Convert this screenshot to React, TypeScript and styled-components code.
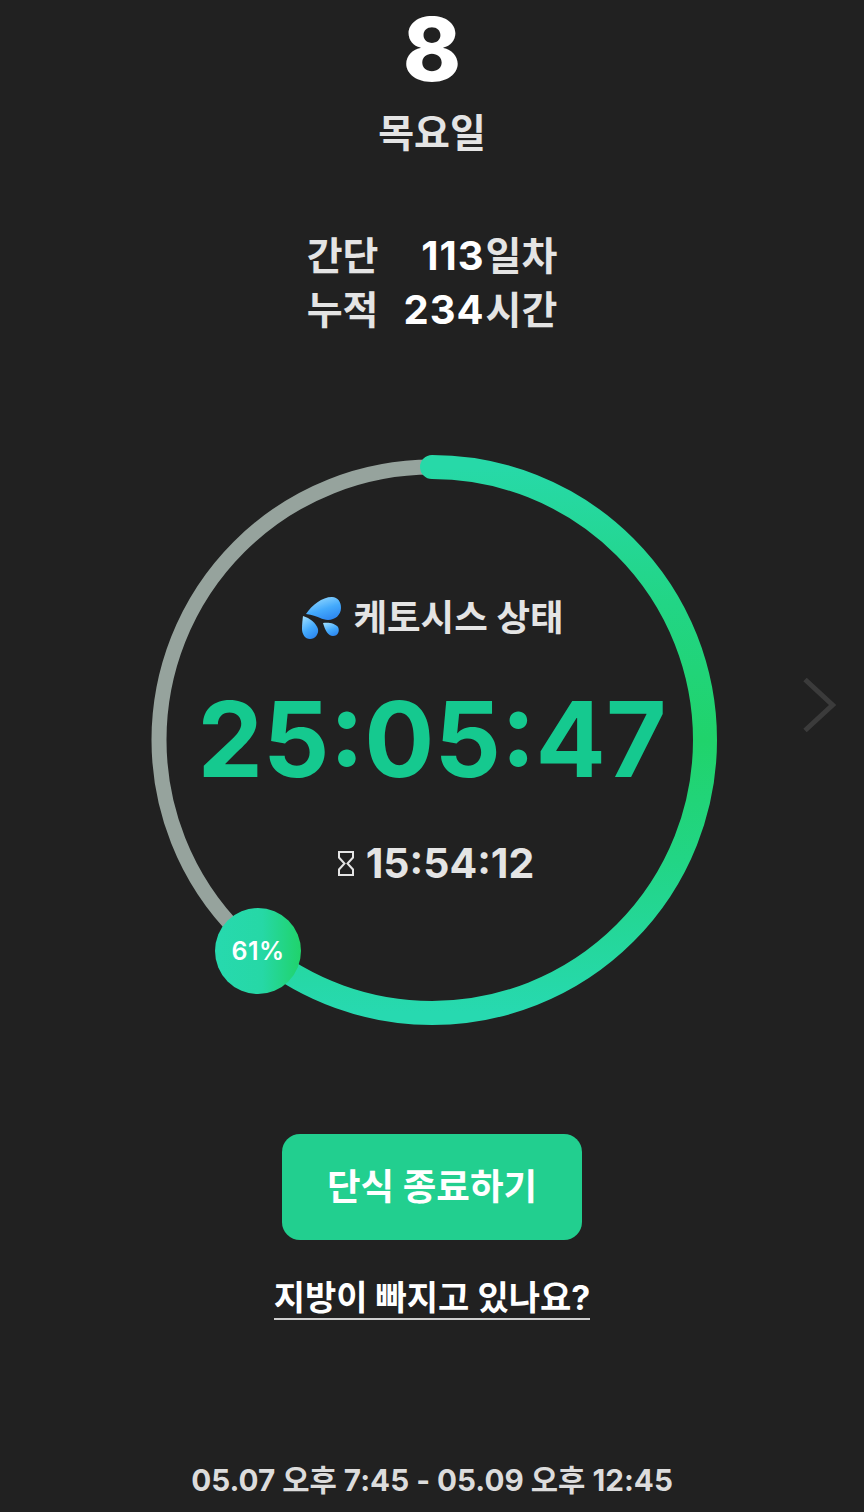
import React from "react";
import styled, { createGlobalStyle } from "styled-components";

const PROGRESS = 61;
const RING_SIZE = 566;
const RING_RADIUS = 273;
const RING_LENGTH = 2 * Math.PI * RING_RADIUS;

const App: React.FC = () => {
  return (
    <Page>
      <GlobalStyle />
      <DateBlock>
        <DayNumber>8</DayNumber>
        <Weekday>목요일</Weekday>
      </DateBlock>
      <Stats>
        <StatLabel>간단</StatLabel>
        <StatValue>
          <strong>113</strong>일차
        </StatValue>
        <StatLabel>누적</StatLabel>
        <StatValue>
          <strong>234</strong>시간
        </StatValue>
      </Stats>
      <RingRow>
        <RingStage>
          <RingSvg viewBox={`0 0 ${RING_SIZE} ${RING_SIZE}`}>
            <defs>
              {/* the arc is rotated -90deg, so its gradient runs along x */}
              <linearGradient id="ringGradient" gradientUnits="userSpaceOnUse" x1="10" y1="0" x2="556" y2="0">
                <stop offset="0" stopColor="#27d9b0" />
                <stop offset="0.28" stopColor="#22d585" />
                <stop offset="0.5" stopColor="#20d36b" />
                <stop offset="0.75" stopColor="#22d585" />
                <stop offset="1" stopColor="#27d9a8" />
              </linearGradient>
            </defs>
            <circle cx="283" cy="283" r={RING_RADIUS} fill="none" stroke="#96a39d" strokeWidth="15" />
            <circle
              cx="283"
              cy="283"
              r={RING_RADIUS}
              fill="none"
              stroke="url(#ringGradient)"
              strokeWidth="24"
              strokeLinecap="round"
              strokeDasharray={`${(RING_LENGTH * PROGRESS) / 100} ${RING_LENGTH}`}
              transform="rotate(-90 283 283)"
            />
          </RingSvg>
          <RingContent>
            <StatusLine>
              <svg width="40" height="42" viewBox="0 0 40 42">
                <defs>
                  <linearGradient id="dropGradient" x1="0.2" y1="0" x2="0.7" y2="1">
                    <stop offset="0" stopColor="#9adcff" />
                    <stop offset="0.55" stopColor="#44aafc" />
                    <stop offset="1" stopColor="#2c86f0" />
                  </linearGradient>
                </defs>
                <path
                  d="M4 17C10 8 20 0 30 0c6 0 9 5 9 11 0 7-6 12-13 12-6 0-9-4-22-6z"
                  fill="url(#dropGradient)"
                />
                <path
                  d="M1 19c7 2 13 7 15 13 1 5-3 10-8 10s-8-5-8-10c0-5 .5-9 1-13z"
                  fill="url(#dropGradient)"
                />
                <path
                  d="M21 26c5-1 12 0 15 4 2 4 0 9-5 9s-8-6-10-13z"
                  fill="url(#dropGradient)"
                />
              </svg>
              <span>케토시스 상태</span>
            </StatusLine>
            <Timer>25:05:47</Timer>
            <Remaining>
              <svg width="16" height="25" viewBox="0 0 16 25">
                <path
                  d="M1 1h14v5.500L9.500 12.500 15 18.500V24H1v-5.500l5.500-6L1 6.500z"
                  fill="none"
                  stroke="#e4e4e4"
                  strokeWidth="2"
                />
              </svg>
              <span>15:54:12</span>
            </Remaining>
          </RingContent>
          <PercentBadge>{PROGRESS}%</PercentBadge>
        </RingStage>
        <NextButton aria-label="다음">
          <svg width="34" height="56" viewBox="0 0 34 56">
            <path d="M3 2.500 30.500 28 3 53.500" fill="none" stroke="#3b3b3b" strokeWidth="5" />
          </svg>
        </NextButton>
      </RingRow>
      <EndButton>단식 종료하기</EndButton>
      <FatLink>지방이 빠지고 있나요?</FatLink>
      <Period>05.07 오후 7:45 - 05.09 오후 12:45</Period>
    </Page>
  );
};

export default App;

const GlobalStyle = createGlobalStyle`
  html, body {
    margin: 0;
    padding: 0;
    background: #212121;
  }
`;

const Page = styled.div`
  width: 864px;
  height: 1512px;
  overflow: hidden;
  background: #212121;
  display: flex;
  flex-direction: column;
  align-items: center;
  font-family: Inter, "Noto Sans CJK KR", sans-serif;
  color: #e4e4e4;
`;

const DateBlock = styled.div`
  display: flex;
  flex-direction: column;
  align-items: center;
`;

const DayNumber = styled.div`
  font-size: 88px;
  font-weight: 800;
  line-height: 98px;
  color: #fff;
`;

const Weekday = styled.div`
  font-size: 39px;
  font-weight: 700;
  line-height: 70px;
`;

const Stats = styled.div`
  margin-top: 61px;
  display: grid;
  grid-template-columns: auto auto;
  column-gap: 25px;
  font-size: 39px;
  font-weight: 700;
  line-height: 54px;
`;

const StatLabel = styled.div`
  text-align: left;
`;

const StatValue = styled.div`
  text-align: right;

  strong {
    color: #fff;
    font-size: 40px;
    font-weight: 700;
    letter-spacing: 1px;
    margin-right: 1px;
  }
`;

const RingRow = styled.div`
  margin-top: 120px;
  width: 100%;
  display: grid;
  grid-template-columns: 1fr ${RING_SIZE}px 1fr;
  align-items: center;
`;

const RingStage = styled.div`
  grid-column: 2;
  position: relative;
  width: ${RING_SIZE}px;
  height: ${RING_SIZE}px;
`;

const RingSvg = styled.svg`
  position: absolute;
  inset: 0;
  width: 100%;
  height: 100%;
  overflow: visible;
`;

const RingContent = styled.div`
  position: relative;
  height: 100%;
  display: flex;
  flex-direction: column;
  align-items: center;
  padding-top: 130px;
  box-sizing: border-box;
`;

const StatusLine = styled.div`
  margin-left: 2px;
  display: flex;
  align-items: center;
  gap: 11px;
  font-size: 36.500px;
  font-weight: 700;
  line-height: 62px;
`;

const Timer = styled.div`
  margin-top: 25px;
  font-size: 104px;
  font-weight: 700;
  line-height: 130px;
  color: #15c98f;
`;

const Remaining = styled.div`
  margin-top: 31px;
  margin-left: 8px;
  display: flex;
  align-items: center;
  gap: 12px;
  font-size: 41px;
  font-weight: 700;
  line-height: 56px;
`;

const PercentBadge = styled.div`
  position: absolute;
  left: 66px;
  top: 451px;
  width: 86px;
  height: 86px;
  border-radius: 50%;
  background: linear-gradient(90deg, #27d9ae 0%, #26d8a6 55%, #20d36b 100%);
  display: flex;
  align-items: center;
  justify-content: center;
  font-size: 25px;
  font-weight: 600;
  letter-spacing: 0.5px;
  color: #fff;
`;

const NextButton = styled.div`
  grid-column: 3;
  justify-self: end;
  margin-right: 28px;
  margin-top: -70px;
  display: flex;
`;

const EndButton = styled.div`
  margin-top: 111px;
  width: 300px;
  height: 106px;
  box-sizing: border-box;
  padding-bottom: 6px;
  border-radius: 18px;
  background: #22cf8f;
  color: #fff;
  display: flex;
  align-items: center;
  justify-content: center;
  font-size: 36.500px;
  font-weight: 700;
`;

const FatLink = styled.div`
  margin-top: 38px;
  border-bottom: 2px solid #cfcfcf;
  color: #fff;
  font-size: 34px;
  font-weight: 700;
  line-height: 40px;
`;

const Period = styled.div`
  margin-top: 138px;
  font-size: 29.700px;
  font-weight: 700;
  line-height: 44px;
  color: #dcdcdc;
`;
